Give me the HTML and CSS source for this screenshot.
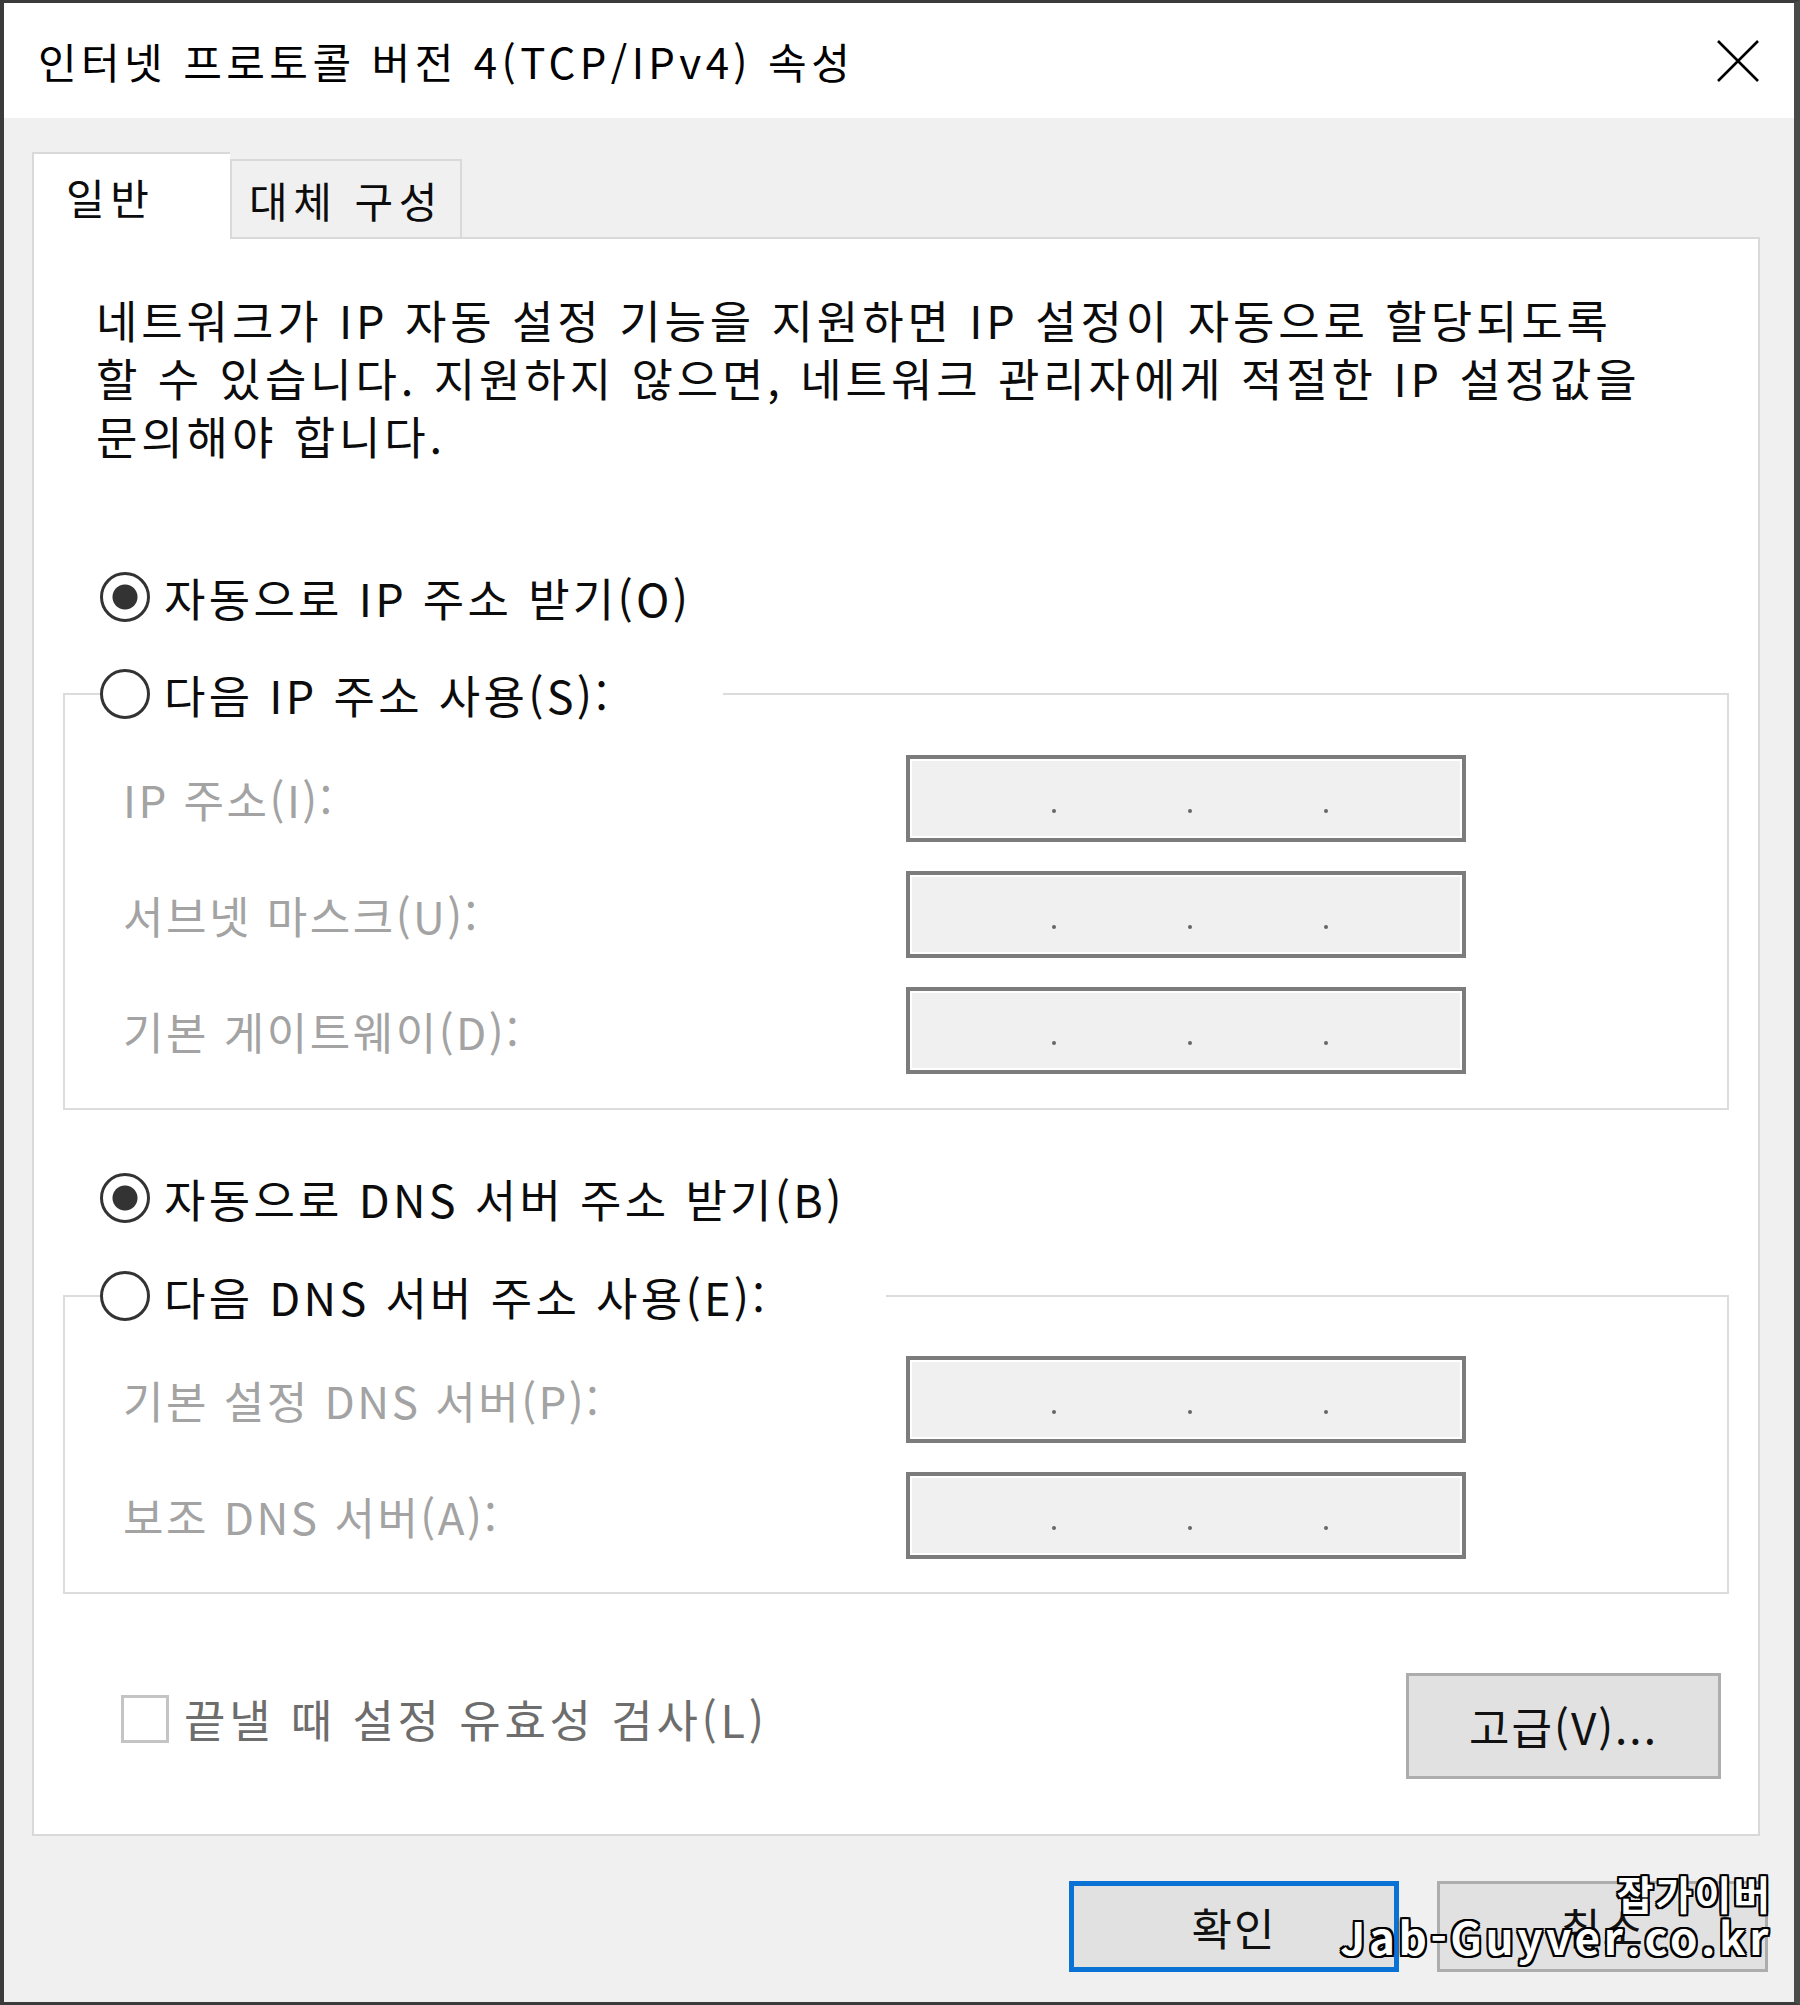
FILE: index.html
```html
<!DOCTYPE html>
<html lang="ko">
  <head>
    <meta charset="UTF-8" />
    <meta name="viewport" content="width=device-width, initial-scale=1.0" />
    <title>인터넷 프로토콜 버전 4(TCP/IPv4) 속성</title>
    <link rel="stylesheet" href="styles.css">
  </head>
  <body>
    <div class="dialog">
      <div class="titlebar">
        <span class="title">인터넷 프로토콜 버전 4(TCP/IPv4) 속성</span>
        <button class="close" aria-label="닫기">
          <svg width="42" height="42" viewBox="0 0 42 42">
            <path d="M1 1 L41 41 M41 1 L1 41" stroke="#000" stroke-width="2.6" fill="none" />
          </svg>
        </button>
      </div>

      <div class="content">
        <div class="tabs">
          <div class="tab active">일반</div>
          <div class="tab">대체 구성</div>
        </div>

        <div class="panel">
          <p class="desc">
            네트워크가 IP 자동 설정 기능을 지원하면 IP 설정이 자동으로 할당되도록<br />
            할 수 있습니다. 지원하지 않으면, 네트워크 관리자에게 적절한 IP 설정값을<br />
            문의해야 합니다.
          </p>

          <label class="radio-row first">
            <span class="radio checked"></span>자동으로 IP 주소 받기(O)
          </label>

          <fieldset class="group">
            <legend class="legend-ip">
              <span class="radio-row"><span class="radio"></span>다음 IP 주소 사용(S):</span>
            </legend>
            <div class="field-label">IP 주소(I):</div>
            <div class="ip"><i></i><i></i><i></i></div>
            <div class="field-label">서브넷 마스크(U):</div>
            <div class="ip"><i></i><i></i><i></i></div>
            <div class="field-label">기본 게이트웨이(D):</div>
            <div class="ip"><i></i><i></i><i></i></div>
          </fieldset>

          <label class="radio-row second">
            <span class="radio checked"></span>자동으로 DNS 서버 주소 받기(B)
          </label>

          <fieldset class="group dns">
            <legend class="legend-dns">
              <span class="radio-row"><span class="radio"></span>다음 DNS 서버 주소 사용(E):</span>
            </legend>
            <div class="field-label">기본 설정 DNS 서버(P):</div>
            <div class="ip"><i></i><i></i><i></i></div>
            <div class="field-label">보조 DNS 서버(A):</div>
            <div class="ip"><i></i><i></i><i></i></div>
          </fieldset>

          <div class="panel-bottom">
            <label class="check"><span class="box"></span>끝낼 때 설정 유효성 검사(L)</label>
            <button class="btn advanced">고급(V)...</button>
          </div>
        </div>

        <div class="footer">
          <button class="btn primary">확인</button>
          <button class="btn">취소</button>
          <div class="watermark">
            <span class="wm-name">잡가이버</span>
            <span class="wm-site">Jab-Guyver.co.kr</span>
          </div>
        </div>
      </div>
    </div>
  </body>
</html>
```

FILE: styles.css
```css
* {
  box-sizing: border-box;
}
body {
  margin: 0;
  font-family: "Noto Sans CJK KR", "Noto Sans", sans-serif;
  color: #0c0c0c;
  background: #f0f0f0;
}
.dialog {
  width: 1800px;
  height: 2005px;
  display: flex;
  flex-direction: column;
  background: #f0f0f0;
  border-top: 3px solid #3b3b3b;
  border-left: 4px solid #3b3b3b;
  border-right: 6px solid #4a4a4a;
  border-bottom: 3px solid #3b3b3b;
}
.titlebar {
  height: 115px;
  background: #fff;
  display: flex;
  align-items: center;
  justify-content: space-between;
  padding-left: 34px;
  padding-right: 35px;
}
.title {
  font-size: 42px;
  letter-spacing: 4.4px;
  color: #000;
}
.close {
  border: none;
  background: none;
  padding: 0;
  width: 42px;
  height: 42px;
  display: flex;
}
.content {
  flex: 1;
  padding: 34px 34px 0 28px;
}
.tabs {
  display: flex;
  align-items: flex-end;
}
.tab {
  height: 78px;
  width: 232px;
  display: flex;
  align-items: center;
  justify-content: center;
  font-size: 42px;
  letter-spacing: 5.5px;
  border: 2px solid #d9d9d9;
  border-bottom: none;
  background: #f0f0f0;
}
.tab.active {
  width: 198px;
  height: 87px;
  justify-content: flex-start;
  padding-left: 32px;
  background: #fff;
  margin-bottom: -2px;
  position: relative;
  z-index: 1;
  border-right: none;
}
.panel {
  background: #fff;
  border: 2px solid #d9d9d9;
  padding: 0 29px 55px;
}
.desc {
  margin: 52px 0 0 33px;
  font-size: 45px;
  line-height: 58px;
  letter-spacing: 3.9px;
}
.radio-row {
  display: flex;
  align-items: center;
  gap: 14px;
  height: 60px;
  font-size: 45px;
  letter-spacing: 3.3px;
  white-space: nowrap;
}
.radio-row.first {
  margin: 102px 0 0 37px;
}
.radio-row.second {
  margin: 58px 0 0 37px;
}
.radio {
  width: 50px;
  height: 50px;
  flex: none;
  border: 3px solid #333;
  border-radius: 50%;
  background: #fff;
}
.radio.checked {
  background: radial-gradient(circle, #333 0 12px, #fff 13px);
}
.group {
  margin: 37px 0 0;
  min-width: 0;
  border: 2px solid #dcdcdc;
  padding: 31px 0 34px 35px;
  display: grid;
  grid-template-columns: 806px 560px;
  row-gap: 29px;
  align-items: center;
}
.group.dns {
  margin-top: 38px;
  padding-top: 30px;
  padding-bottom: 33px;
}
.group legend {
  padding: 0;
  height: 60px;
}
.legend-ip {
  width: 623px;
}
.legend-dns {
  width: 786px;
}
.field-label {
  padding-left: 23px;
  font-size: 44px;
  letter-spacing: 2.5px;
  color: #a3a3a3;
}
.ip {
  height: 87px;
  border: 4px solid #7c7c7c;
  box-shadow: inset 0 0 0 2px #fff;
  background: #f0f0f0;
  display: flex;
  align-items: center;
  padding-left: 142px;
  gap: 132px;
}
.ip i {
  width: 4px;
  height: 4px;
  border-radius: 50%;
  background: #666;
  margin-top: 24px;
}
.panel-bottom {
  margin-top: 79px;
  display: flex;
  justify-content: space-between;
  align-items: flex-start;
}
.check {
  display: flex;
  align-items: center;
  gap: 15px;
  margin: 13px 0 0 58px;
  font-size: 45px;
  letter-spacing: 3.8px;
  color: #6d6d6d;
}
.box {
  width: 48px;
  height: 48px;
  border: 3px solid #c4c4c4;
  background: #fff;
}
.btn {
  font-family: inherit;
  font-size: 44px;
  letter-spacing: 2px;
  color: #111;
  background: #e1e1e1;
  border: 3px solid #adadad;
  padding: 0;
}
.advanced {
  width: 315px;
  height: 106px;
  margin-right: 8px;
}
.footer {
  position: relative;
  display: flex;
  justify-content: flex-end;
  gap: 38px;
  margin: 45px -8px 0 0;
}
.footer .btn {
  width: 331px;
  height: 91px;
}
.footer .primary {
  width: 330px;
  border: 5px solid #0a72d4;
}
.watermark {
  position: absolute;
  right: -4px;
  top: -9px;
  display: flex;
  flex-direction: column;
  align-items: flex-end;
  font-weight: 700;
  line-height: 43px;
  color: #fff;
  text-shadow: -2px -2px 0 #000, 2px -2px 0 #000, -2px 2px 0 #000, 2px 2px 0 #000,
    0 2px 0 #000, 0 -2px 0 #000, 2px 0 0 #000, -2px 0 0 #000;
}
.wm-name {
  font-size: 40px;
  letter-spacing: 2px;
}
.wm-site {
  font-size: 44px;
  letter-spacing: 3.6px;
}
```
